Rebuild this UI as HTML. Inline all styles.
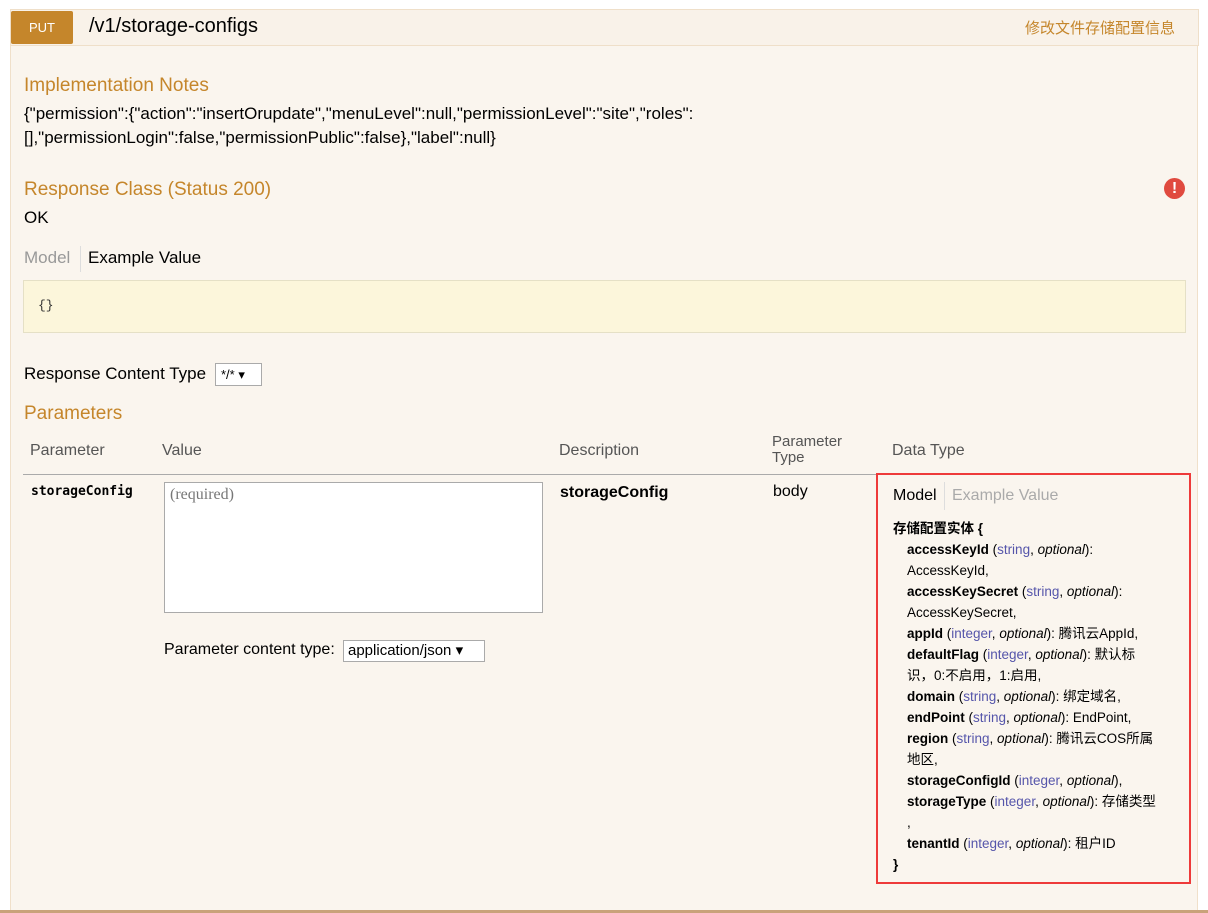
<!DOCTYPE html>
<html><head><meta charset="utf-8"><style>
body{margin:0;width:1208px;height:913px;background:#fff;position:relative;overflow:hidden;font-family:"Liberation Sans","Noto Sans CJK SC",sans-serif;color:#000}
.a{position:absolute;white-space:nowrap}
.panel{position:absolute;left:10px;top:9px;width:1188px;height:904px;background:#faf5ee;border:1px solid #f0e0ca;box-sizing:border-box}
.hdr{position:absolute;left:10px;top:9px;width:1189px;height:37px;background:#f9f2e9;border:1px solid #efdfc9;box-sizing:border-box}
.h{color:#c5862b;font-size:19px}
.t{font-size:17px}
.g{color:#555;font-size:16px}
.m{font-size:13.5px;line-height:21px}
.m b{font-weight:bold}
.s{color:#55a}
</style></head><body>
<div class="panel"></div>
<div class="hdr"></div>
<div class="a" style="left:11px;top:11px;width:62px;height:33px;background:#c5862b;border-radius:2px;color:#fff;font-size:13px;line-height:34px;text-align:center">PUT</div>
<div class="a" style="left:89px;top:15px;font-size:20px">/v1/storage-configs</div>
<div class="a" style="left:1025px;top:17px;font-size:15px;color:#c5862b">修改文件存储配置信息</div>

<div class="a h" style="left:24px;top:75px">Implementation Notes</div>
<div class="a t" style="left:24px;top:104px">{"permission":{"action":"insertOrupdate","menuLevel":null,"permissionLevel":"site","roles":</div>
<div class="a t" style="left:24px;top:128px">[],"permissionLogin":false,"permissionPublic":false},"label":null}</div>

<div class="a h" style="left:24px;top:179px">Response Class (Status 200)</div>
<div class="a" style="left:1164px;top:178px;width:21px;height:21px;border-radius:50%;background:#e04a3f;color:#fff;font-weight:bold;font-size:16px;line-height:21px;text-align:center">!</div>
<div class="a t" style="left:24px;top:208px">OK</div>
<div class="a" style="left:24px;top:248px;font-size:17px;color:#999">Model</div>
<div class="a" style="left:80px;top:246px;width:1px;height:26px;background:#ddd"></div>
<div class="a t" style="left:88px;top:248px">Example Value</div>
<div class="a" style="left:23px;top:280px;width:1163px;height:53px;background:#fcf6db;border:1px solid #e5e0c6;box-sizing:border-box"></div>
<div class="a" style="left:38px;top:298px;font-family:'Liberation Mono',monospace;font-size:13px;color:#333">{}</div>

<div class="a t" style="left:24px;top:364px">Response Content Type</div>
<div class="a" style="left:215px;top:363px;width:47px;height:23px;background:#fff;border:1px solid #aaa;box-sizing:border-box;font-size:13px;line-height:21px;padding-left:5px">*/* ▾</div>

<div class="a h" style="left:24px;top:403px">Parameters</div>
<div class="a g" style="left:30px;top:442px">Parameter</div>
<div class="a g" style="left:162px;top:442px">Value</div>
<div class="a g" style="left:559px;top:442px">Description</div>
<div class="a g" style="left:772px;top:434px;font-size:15px;line-height:16px;white-space:normal">Parameter<br>Type</div>
<div class="a g" style="left:892px;top:442px">Data Type</div>
<div class="a" style="left:23px;top:474px;width:853px;height:1px;background:#aaa"></div>

<div class="a" style="left:31px;top:484px;font-family:'DejaVu Sans Mono',monospace;font-weight:bold;font-size:13px">storageConfig</div>
<div class="a" style="left:164px;top:482px;width:379px;height:131px;background:#fff;border:1px solid #aaa;box-sizing:border-box"></div>
<div class="a" style="left:170px;top:486px;font-family:'Liberation Serif',serif;font-size:16px;color:#777">(required)</div>
<div class="a" style="left:164px;top:641px;font-size:16px">Parameter content type:</div>
<div class="a" style="left:343px;top:640px;width:142px;height:22px;background:#fff;border:1px solid #aaa;box-sizing:border-box;font-size:15px;line-height:20px;padding-left:4px">application/json ▾</div>
<div class="a" style="left:560px;top:484px;font-weight:bold;font-size:16px">storageConfig</div>
<div class="a" style="left:773px;top:483px;font-size:16px">body</div>

<div class="a" style="left:876px;top:473px;width:315px;height:411px;border:2px solid #ee3a3a;box-sizing:border-box"></div>
<div class="a" style="left:893px;top:487px;font-size:16px">Model</div>
<div class="a" style="left:944px;top:482px;width:1px;height:28px;background:#ddd"></div>
<div class="a" style="left:952px;top:487px;font-size:16px;color:#aaa">Example Value</div>
<div class="a m" style="left:893px;top:518px;white-space:normal;width:290px">
<b>存储配置实体 {</b><br>
<div style="padding-left:14px">
<b>accessKeyId</b> (<span class="s">string</span>, <i>optional</i>):<br>AccessKeyId,<br>
<b>accessKeySecret</b> (<span class="s">string</span>, <i>optional</i>):<br>AccessKeySecret,<br>
<b>appId</b> (<span class="s">integer</span>, <i>optional</i>): 腾讯云AppId,<br>
<b>defaultFlag</b> (<span class="s">integer</span>, <i>optional</i>): 默认标<br>识，0:不启用，1:启用,<br>
<b>domain</b> (<span class="s">string</span>, <i>optional</i>): 绑定域名,<br>
<b>endPoint</b> (<span class="s">string</span>, <i>optional</i>): EndPoint,<br>
<b>region</b> (<span class="s">string</span>, <i>optional</i>): 腾讯云COS所属<br>地区,<br>
<b>storageConfigId</b> (<span class="s">integer</span>, <i>optional</i>),<br>
<b>storageType</b> (<span class="s">integer</span>, <i>optional</i>): 存储类型<br>,<br>
<b>tenantId</b> (<span class="s">integer</span>, <i>optional</i>): 租户ID
</div>
<b>}</b>
</div>
<div class="a" style="left:0;top:910px;width:1208px;height:3px;background:#c9a27a"></div>
</body></html>
